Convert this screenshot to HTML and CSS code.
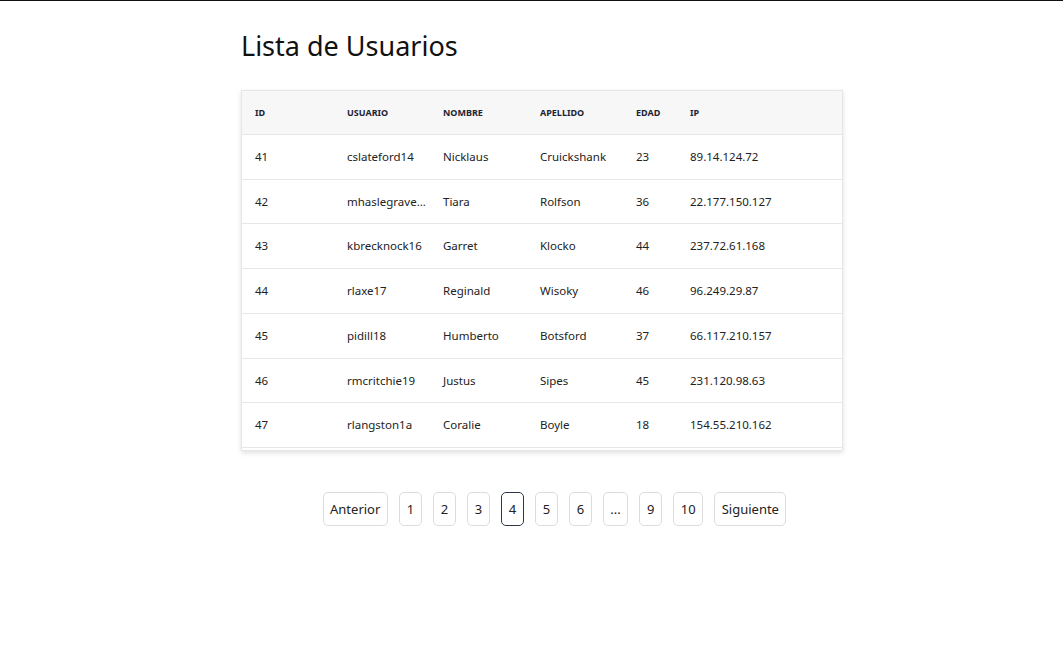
FILE: index.html
```html
<!DOCTYPE html>
<html lang="es">
<head>
<meta charset="utf-8">
<title>Lista de Usuarios</title>
<link rel="stylesheet" href="styles.css">
</head>
<body>
<main class="wrap">
  <h1 class="title">Lista de Usuarios</h1>
  <div class="card">
    <table class="users">
      <colgroup>
        <col class="c-id"><col class="c-user"><col class="c-name"><col class="c-last"><col class="c-age"><col class="c-ip">
      </colgroup>
      <thead>
        <tr><th>ID</th><th>Usuario</th><th>Nombre</th><th>Apellido</th><th>Edad</th><th>IP</th></tr>
      </thead>
      <tbody>
        <tr><td>41</td><td class="user"><span class="clip">cslateford14</span></td><td>Nicklaus</td><td>Cruickshank</td><td>23</td><td>89.14.124.72</td></tr>
        <tr><td>42</td><td class="user"><span class="clip">mhaslegrave15</span></td><td>Tiara</td><td>Rolfson</td><td>36</td><td>22.177.150.127</td></tr>
        <tr><td>43</td><td class="user"><span class="clip">kbrecknock16</span></td><td>Garret</td><td>Klocko</td><td>44</td><td>237.72.61.168</td></tr>
        <tr><td>44</td><td class="user"><span class="clip">rlaxe17</span></td><td>Reginald</td><td>Wisoky</td><td>46</td><td>96.249.29.87</td></tr>
        <tr><td>45</td><td class="user"><span class="clip">pidill18</span></td><td>Humberto</td><td>Botsford</td><td>37</td><td>66.117.210.157</td></tr>
        <tr><td>46</td><td class="user"><span class="clip">rmcritchie19</span></td><td>Justus</td><td>Sipes</td><td>45</td><td>231.120.98.63</td></tr>
        <tr><td>47</td><td class="user"><span class="clip">rlangston1a</span></td><td>Coralie</td><td>Boyle</td><td>18</td><td>154.55.210.162</td></tr>
      </tbody>
    </table>
  </div>
  <nav class="pager">
    <button class="pg">Anterior</button>
    <button class="pg">1</button>
    <button class="pg">2</button>
    <button class="pg">3</button>
    <button class="pg active">4</button>
    <button class="pg">5</button>
    <button class="pg">6</button>
    <button class="pg">...</button>
    <button class="pg">9</button>
    <button class="pg">10</button>
    <button class="pg">Siguiente</button>
  </nav>
</main>
</body>
</html>
```
FILE: styles.css
```css
html, body {
  margin: 0;
  padding: 0;
  background: #fff;
}
body {
  border-top: 1px solid #111;
  font-family: "Noto Sans", "Open Sans", sans-serif;
  color: #222;
}
.wrap {
  width: 627px;
  margin-left: 241px;
  padding-top: 27px;
}
.title {
  margin: 0 0 27px 0;
  font-size: 27px;
  font-weight: 400;
  color: #111;
  line-height: 35px;
}
.card {
  width: 602px;
  border: 1px solid #e6e6e6;
  box-shadow: 0 2px 5px rgba(0, 0, 0, 0.12);
  box-sizing: border-box;
  padding-bottom: 2px;
}
.users {
  width: 100%;
  border-collapse: collapse;
  table-layout: fixed;
}
.c-id { width: 92px; }
.c-user { width: 96px; }
.c-name { width: 97px; }
.c-last { width: 96px; }
.c-age { width: 54px; }
.users th {
  text-align: left;
  font-size: 9px;
  font-weight: 700;
  text-transform: uppercase;
  color: #1e2433;
  background: #f7f7f7;
  padding: 15px 13px;
  line-height: 12px;
  border-bottom: 1px solid #e6e6e6;
  height: 13px;
}
.users td {
  font-size: 11.5px;
  padding: 13px 13px;
  line-height: 17.7px;
  border-bottom: 1px solid #e6e6e6;
  white-space: nowrap;
  color: #222;
}
.users td.user {
  padding-right: 0;
}
.clip {
  display: block;
  max-width: 80px;
  overflow: hidden;
  text-overflow: ellipsis;
  white-space: nowrap;
}
.pager {
  display: flex;
  justify-content: center;
  gap: 11px;
  margin-top: 41px;
}
.pg {
  font-family: "Noto Sans", "Open Sans", sans-serif;
  font-size: 13px;
  color: #222;
  background: #fff;
  border: 1px solid #dcdcdc;
  border-radius: 5px;
  height: 34px;
  padding: 0 6.5px;
  min-width: 23px;
  cursor: pointer;
}
.pg.active {
  border-color: #2d3748;
}
```
